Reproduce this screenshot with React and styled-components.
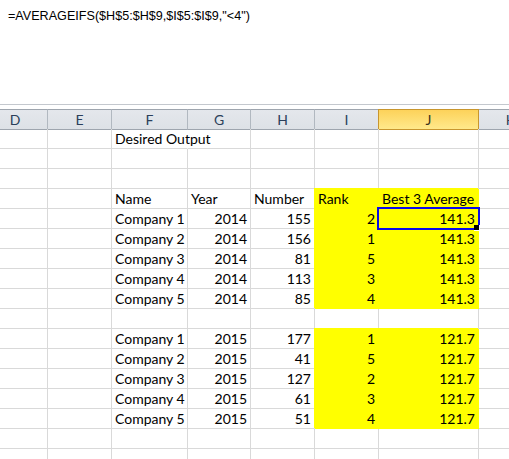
import React from "react";
import styled, { createGlobalStyle } from "styled-components";

const GlobalStyle = createGlobalStyle`
  body {
    margin: 0;
    background: #ffffff;
  }
`;

const grid = "#d9d9d9";
const yellow = "#ffff00";

// column widths incl. right gridline; D starts off-screen
const columns = [
  { key: "D", width: 65 },
  { key: "E", width: 64 },
  { key: "F", width: 76 },
  { key: "G", width: 63 },
  { key: "H", width: 64 },
  { key: "I", width: 64 },
  { key: "J", width: 100 },
  { key: "K", width: 64 },
];
const template = columns.map((c) => c.width + "px").join(" ");

const Page = styled.div`
  width: 509px;
  height: 459px;
  overflow: hidden;
  background: #ffffff;
`;

const FormulaBar = styled.div`
  height: 105px;
  box-sizing: border-box;
  padding: 9px 0 0 8px;
  border-bottom: 1px solid #c4c8ce;
  font-family: "Liberation Sans", Arial, sans-serif;
  font-size: 12.6px;
  color: #000;
`;

const Gap = styled.div`
  height: 4px;
`;

const Sheet = styled.div`
  margin-left: -17px;
  display: grid;
  grid-template-columns: ${template};
  grid-auto-rows: 20px;
  font-family: Lato, "Liberation Sans", sans-serif;
  font-size: 14px;
`;

const ColHeader = styled.div`
  height: 21px;
  box-sizing: border-box;
  display: flex;
  align-items: center;
  justify-content: center;
  border-top: 1px solid ${(p) => (p.$selected ? "#c8962e" : "#9ea5ae")};
  border-bottom: 1px solid ${(p) => (p.$selected ? "#c8962e" : "#9ea5ae")};
  border-right: 1px solid ${(p) => (p.$selected ? "#c8962e" : "#b1b8c0")};
  ${(p) => (p.$selected ? "border-left: 1px solid #c8962e; margin-left: -1px;" : "")}
  background: ${(p) =>
    p.$selected
      ? "linear-gradient(#fdd25a, #ffe98b)"
      : "linear-gradient(#e4e7ec, #dde1e6)"};
  color: ${(p) => (p.$selected ? "#3b3320" : "#2b3f5a")};
  font-size: 14px;
`;

const Cell = styled.div`
  position: relative;
  box-sizing: border-box;
  height: 20px;
  line-height: 19px;
  padding: 0 3px;
  white-space: nowrap;
  overflow: visible;
  color: #000;
  text-align: ${(p) => (p.$right ? "right" : "left")};
  background: ${(p) => (p.$fill ? yellow : "transparent")};
  border-right: 1px solid
    ${(p) => (p.$fill ? yellow : p.$spill ? "transparent" : grid)};
  border-bottom: 1px solid ${(p) => (p.$fill ? yellow : grid)};
  box-shadow: ${(p) => (p.$fill ? `-1px -1px 0 ${yellow}` : "none")};
`;

const Selection = styled.div`
  position: absolute;
  left: -2px;
  top: -2px;
  width: 103px;
  height: 23px;
  box-sizing: border-box;
  border: 2px solid #0a0ae6;
  z-index: 2;
  pointer-events: none;
`;

const FillHandle = styled.div`
  position: absolute;
  left: 95px;
  top: 16px;
  width: 6px;
  height: 6px;
  box-sizing: border-box;
  background: #000;
  border: 1px solid #fff;
  border-top: none;
  border-left: none;
`;

const data2014 = [
  ["Company 1", 2014, 155, 2],
  ["Company 2", 2014, 156, 1],
  ["Company 3", 2014, 81, 5],
  ["Company 4", 2014, 113, 3],
  ["Company 5", 2014, 85, 4],
];

const data2015 = [
  ["Company 1", 2015, 177, 1],
  ["Company 2", 2015, 41, 5],
  ["Company 3", 2015, 127, 2],
  ["Company 4", 2015, 61, 3],
  ["Company 5", 2015, 51, 4],
];

function EmptyRow() {
  return columns.map((c) => <Cell key={c.key} />);
}

function DataRow({ row, avg, selected }) {
  const [name, year, num, rank] = row;
  return (
    <>
      <Cell />
      <Cell />
      <Cell>{name}</Cell>
      <Cell $right>{year}</Cell>
      <Cell $right>{num}</Cell>
      <Cell $fill $right>{rank}</Cell>
      <Cell $fill $right>
        {avg}
        {selected && (
          <Selection>
            <FillHandle />
          </Selection>
        )}
      </Cell>
      <Cell />
    </>
  );
}

export default function App() {
  return (
    <Page>
      <GlobalStyle />
      <FormulaBar>=AVERAGEIFS($H$5:$H$9,$I$5:$I$9,"&lt;4")</FormulaBar>
      <Gap />
      <Sheet>
        {columns.map((c) => (
          <ColHeader key={c.key} $selected={c.key === "J"}>
            {c.key}
          </ColHeader>
        ))}

        <Cell />
        <Cell />
        <Cell $spill>Desired Output</Cell>
        <Cell />
        <Cell />
        <Cell />
        <Cell />
        <Cell />

        <EmptyRow />
        <EmptyRow />

        <Cell />
        <Cell />
        <Cell>Name</Cell>
        <Cell>Year</Cell>
        <Cell>Number</Cell>
        <Cell $fill>Rank</Cell>
        <Cell $fill>Best 3 Average</Cell>
        <Cell />

        {data2014.map((r, i) => (
          <DataRow key={"a" + i} row={r} avg="141.3" selected={i === 0} />
        ))}

        <EmptyRow />

        {data2015.map((r, i) => (
          <DataRow key={"b" + i} row={r} avg="121.7" />
        ))}

        <EmptyRow />
        <EmptyRow />
      </Sheet>
    </Page>
  );
}
